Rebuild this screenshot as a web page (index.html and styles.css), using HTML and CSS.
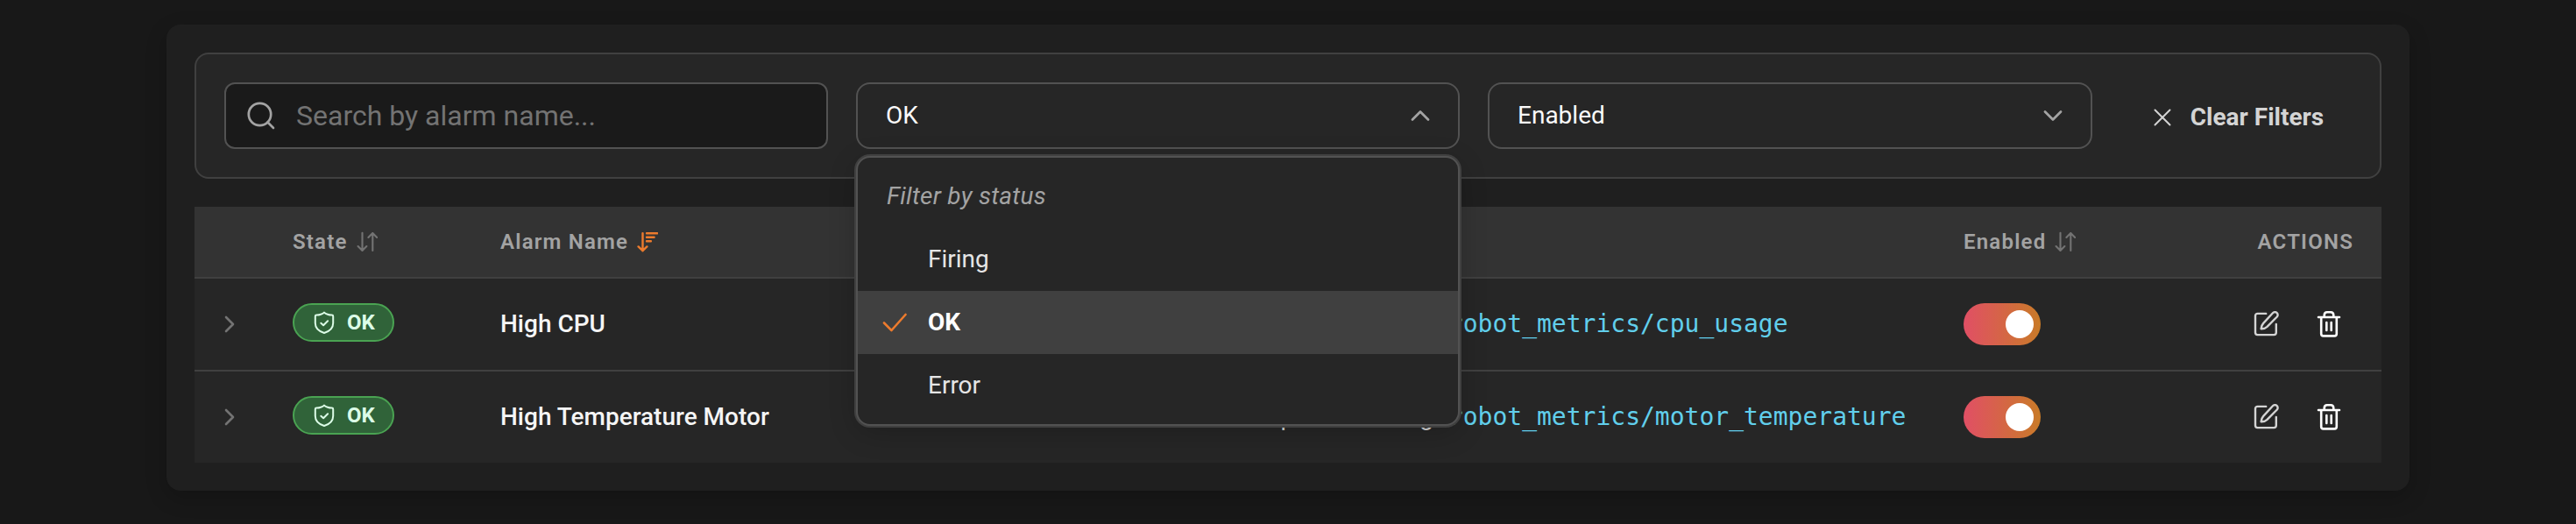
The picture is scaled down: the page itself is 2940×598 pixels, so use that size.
FILE: index.html
```html
<!DOCTYPE html>
<html lang="en">
<head>
<meta charset="utf-8">
<title>Alarms</title>
<link rel="stylesheet" href="styles.css">
</head>
<body>
<svg class="defs" width="0" height="0" aria-hidden="true">
  <symbol id="sort" viewBox="0 0 24 24"><path d="M6.5 1.7v20M1.6 17l4.9 5 4.9-5M18.3 22V2M13.4 7l4.9-5 4.9 5"/></symbol>
  <symbol id="sort-desc" viewBox="0 0 24 24"><path d="M6.5 2.2v20M1.6 17.4l4.9 4.8 4.9-4.8M11 2.2h12.3M11 6.8h8.6M11 11.2h4.9"/></symbol>
  <symbol id="chev" viewBox="0 0 12 20"><path d="M2 2l8 8-8 8"/></symbol>
  <symbol id="shield" viewBox="0 0 24 28"><path d="M12 2.500C10.600 4.300 6 5.800 3.200 5.600Q1.800 5.600 1.800 7v7.800c0 6 4.200 9.400 10.200 11.200 6-1.800 10.200-5.200 10.200-11.200V7q0-1.400-1.400-1.400C18 5.800 13.400 4.300 12 2.500zM8.300 14.700l2.800 2.600 5-5"/></symbol>
  <symbol id="edit" viewBox="0 0 30 30"><path d="M14.200 2.900H4.500A2.500 2.500 0 0 0 2 5.400v19.200A2.500 2.500 0 0 0 4.500 27.100h18.800a2.500 2.500 0 0 0 2.500-2.500V15M21.900 2.300a3.150 3.150 0 0 1 4.900 4.200L15.500 17.800c-2 1.900-4.200 2.600-6.900 2.500.1-2.600.800-4.600 2.600-6.500z"/></symbol>
  <symbol id="trash" viewBox="0 0 28 32"><path d="M2 8h24M8.700 8V6c0-2.200 1.300-3.700 3.300-3.700h4c2 0 3.300 1.500 3.300 3.700v2M5.200 8v19c0 1.500.900 2.400 2.400 2.400h12.800c1.500 0 2.400-.9 2.400-2.400V8M11.300 14v9M16.700 14v9"/></symbol>
</svg>
<main class="panel">
  <section class="filters">
    <div class="field search">
      <svg class="search-icon" viewBox="0 0 32 32"><circle cx="14.500" cy="14.500" r="12.700"/><path d="M23.500 23.500l6.500 6.500"/></svg>
      <span>Search by alarm name...</span>
    </div>
    <div class="field select">
      <span>OK</span>
      <svg class="caret" viewBox="0 0 22 14"><path d="M2 11.500l9-9 9 9"/></svg>
      <div class="menu">
        <div class="item hint">Filter by status</div>
        <div class="item"><span class="tick"></span>Firing</div>
        <div class="item active"><span class="tick"><svg viewBox="0 0 28 22"><path d="M2 11.500l8.500 8.500L26.500 2"/></svg></span>OK</div>
        <div class="item"><span class="tick"></span>Error</div>
      </div>
    </div>
    <div class="field select">
      <span>Enabled</span>
      <svg class="caret" viewBox="0 0 22 14"><path d="M2 2.500l9 9 9-9"/></svg>
    </div>
    <button class="clear"><svg viewBox="0 0 20 20"><path d="M1.500 1.500l17 17M18.500 1.500l-17 17"/></svg>Clear Filters</button>
  </section>
  <section class="table">
    <div class="row head">
      <div></div>
      <div>State<svg class="sort"><use href="#sort"/></svg></div>
      <div>Alarm Name<svg class="sort on"><use href="#sort-desc"/></svg></div>
      <div></div>
      <div>Enabled<svg class="sort"><use href="#sort"/></svg></div>
      <div class="end">ACTIONS</div>
    </div>
    <div class="row">
      <div><svg class="expand"><use href="#chev"/></svg></div>
      <div><span class="badge"><svg><use href="#shield"/></svg>OK</span></div>
      <div class="name">High CPU</div>
      <div class="cond"><span class="rule">Topic is missing</span><code>/robot_metrics/cpu_usage</code></div>
      <div><span class="toggle"></span></div>
      <div class="actions"><svg class="edit"><use href="#edit"/></svg><svg class="trash"><use href="#trash"/></svg></div>
    </div>
    <div class="row">
      <div><svg class="expand"><use href="#chev"/></svg></div>
      <div><span class="badge"><svg><use href="#shield"/></svg>OK</span></div>
      <div class="name">High Temperature Motor</div>
      <div class="cond"><span class="rule">Topic is missing</span><code>/robot_metrics/motor_temperature</code></div>
      <div><span class="toggle"></span></div>
      <div class="actions"><svg class="edit"><use href="#edit"/></svg><svg class="trash"><use href="#trash"/></svg></div>
    </div>
  </section>
</main>
</body>
</html>
```
FILE: styles.css
```css
* { box-sizing: border-box; }
body {
  margin: 0;
  height: 598px;
  overflow: hidden;
  padding: 28px 190px 38px;
  background: #181818;
  color: #f5f5f5;
  font: 400 28px/40px Roboto, sans-serif;
}
svg { fill: none; stroke: currentColor; stroke-linecap: round; stroke-linejoin: round; flex: none; display: block; }
.defs { position: absolute; }
.panel {
  height: 532px;
  padding: 32px;
  border-radius: 16px;
  background: #1f1f1f;
  box-shadow: 0 8px 24px rgba(0, 0, 0, .2);
}
.filters {
  display: grid;
  grid-template-columns: 689px 689px 690px 1fr;
  gap: 32px;
  height: 144px;
  padding: 32px;
  border: 2px solid #404040;
  border-radius: 16px;
  background: #262626;
}
.field {
  display: flex;
  align-items: center;
  height: 76px;
  border: 2px solid #525252;
}
.search {
  gap: 24px;
  padding-left: 24px;
  border-radius: 12px;
  background: #1a1a1a;
  color: #737373;
  font-size: 32px;
}
.search-icon { width: 32px; height: 32px; color: #a3a3a3; stroke-width: 2.7; }
.select {
  position: relative;
  justify-content: space-between;
  padding: 0 32px;
  border-radius: 16px;
  color: #fafafa;
}
.caret { width: 22px; height: 14px; color: #a3a3a3; stroke-width: 2.8; }
.menu {
  position: absolute;
  z-index: 2;
  top: 82px;
  left: -2px;
  right: -2px;
  height: 308px;
  padding: 8px 0;
  border: 2px solid #525252;
  border-radius: 16px;
  background: #262626;
  box-shadow: 0 0 0 2px #404040, 0 8px 32px rgba(0, 0, 0, .2);
}
.item { display: flex; align-items: center; height: 72px; padding: 0 0 0 28px; color: #e5e5e5; }
.hint { padding-left: 33px; font-style: italic; letter-spacing: .25px; color: #a3a3a3; }
.active { background: #404040; color: #fff; font-weight: 700; }
.tick { width: 52px; color: #ed7b2d; }
.tick svg { width: 28px; height: 22px; stroke-width: 2.6; }
.clear {
  display: flex;
  align-items: center;
  justify-content: center;
  gap: 22px;
  height: 80px;
  padding: 0 0 0 6px;
  border: 0;
  background: none;
  color: #d4d4d4;
  font: 700 28px/40px Roboto, sans-serif;
}
.clear svg { width: 20px; height: 20px; stroke-width: 2; }
.table { margin-top: 32px; background: #262626; }
.row {
  display: grid;
  grid-template-columns: 80px 237px 830px 840px 1fr 180px;
  align-items: center;
  height: 106px;
  padding: 0 32px;
  border-bottom: 2px solid #404040;
}
.row:last-child { height: 104px; border: 0; }
.head {
  height: 82px;
  background: #333;
  color: #a3a3a3;
  font-size: 24px;
  font-weight: 600;
  letter-spacing: 1.2px;
}
.head > div { display: flex; align-items: center; }
.head .end { justify-content: flex-end; }
.sort { width: 24px; height: 24px; margin-left: 10px; color: #737373; stroke-width: 2.1; }
.sort.on { color: #ed7b2d; stroke-width: 2.4; }
.expand { width: 12px; height: 20px; margin-left: 2px; color: #737373; stroke-width: 2.6; }
.badge {
  display: flex;
  align-items: center;
  gap: 14px;
  width: 116px;
  height: 44px;
  margin-bottom: 4px;
  padding-left: 22px;
  border: 2px solid #4aa352;
  border-radius: 22px;
  background: #306339;
  color: #dcfce7;
  font-size: 24px;
  font-weight: 700;
}
.badge svg { width: 24px; height: 28px; stroke-width: 2; }
.name { font-weight: 500; }
.cond { display: flex; align-items: baseline; }
.rule { width: 235px; text-align: right; word-spacing: 2px; white-space: nowrap; color: #d4d4d4; }
code { font: 28px/40px "DejaVu Sans Mono", monospace; color: #61cfec; white-space: nowrap; }
.toggle {
  display: flex;
  align-items: center;
  justify-content: flex-end;
  width: 88px;
  height: 48px;
  padding: 8px;
  border-radius: 24px;
  background: linear-gradient(90deg, #e14f65, #c97b28);
}
.toggle::after { content: ""; width: 32px; height: 32px; border-radius: 50%; background: #fff; }
.actions { display: flex; align-items: center; gap: 42px; padding-left: 66px; }
.edit { width: 30px; height: 30px; color: #d4d4d4; stroke-width: 2.4; }
.trash { width: 28px; height: 32px; color: #fff; stroke-width: 2.6; }
```
